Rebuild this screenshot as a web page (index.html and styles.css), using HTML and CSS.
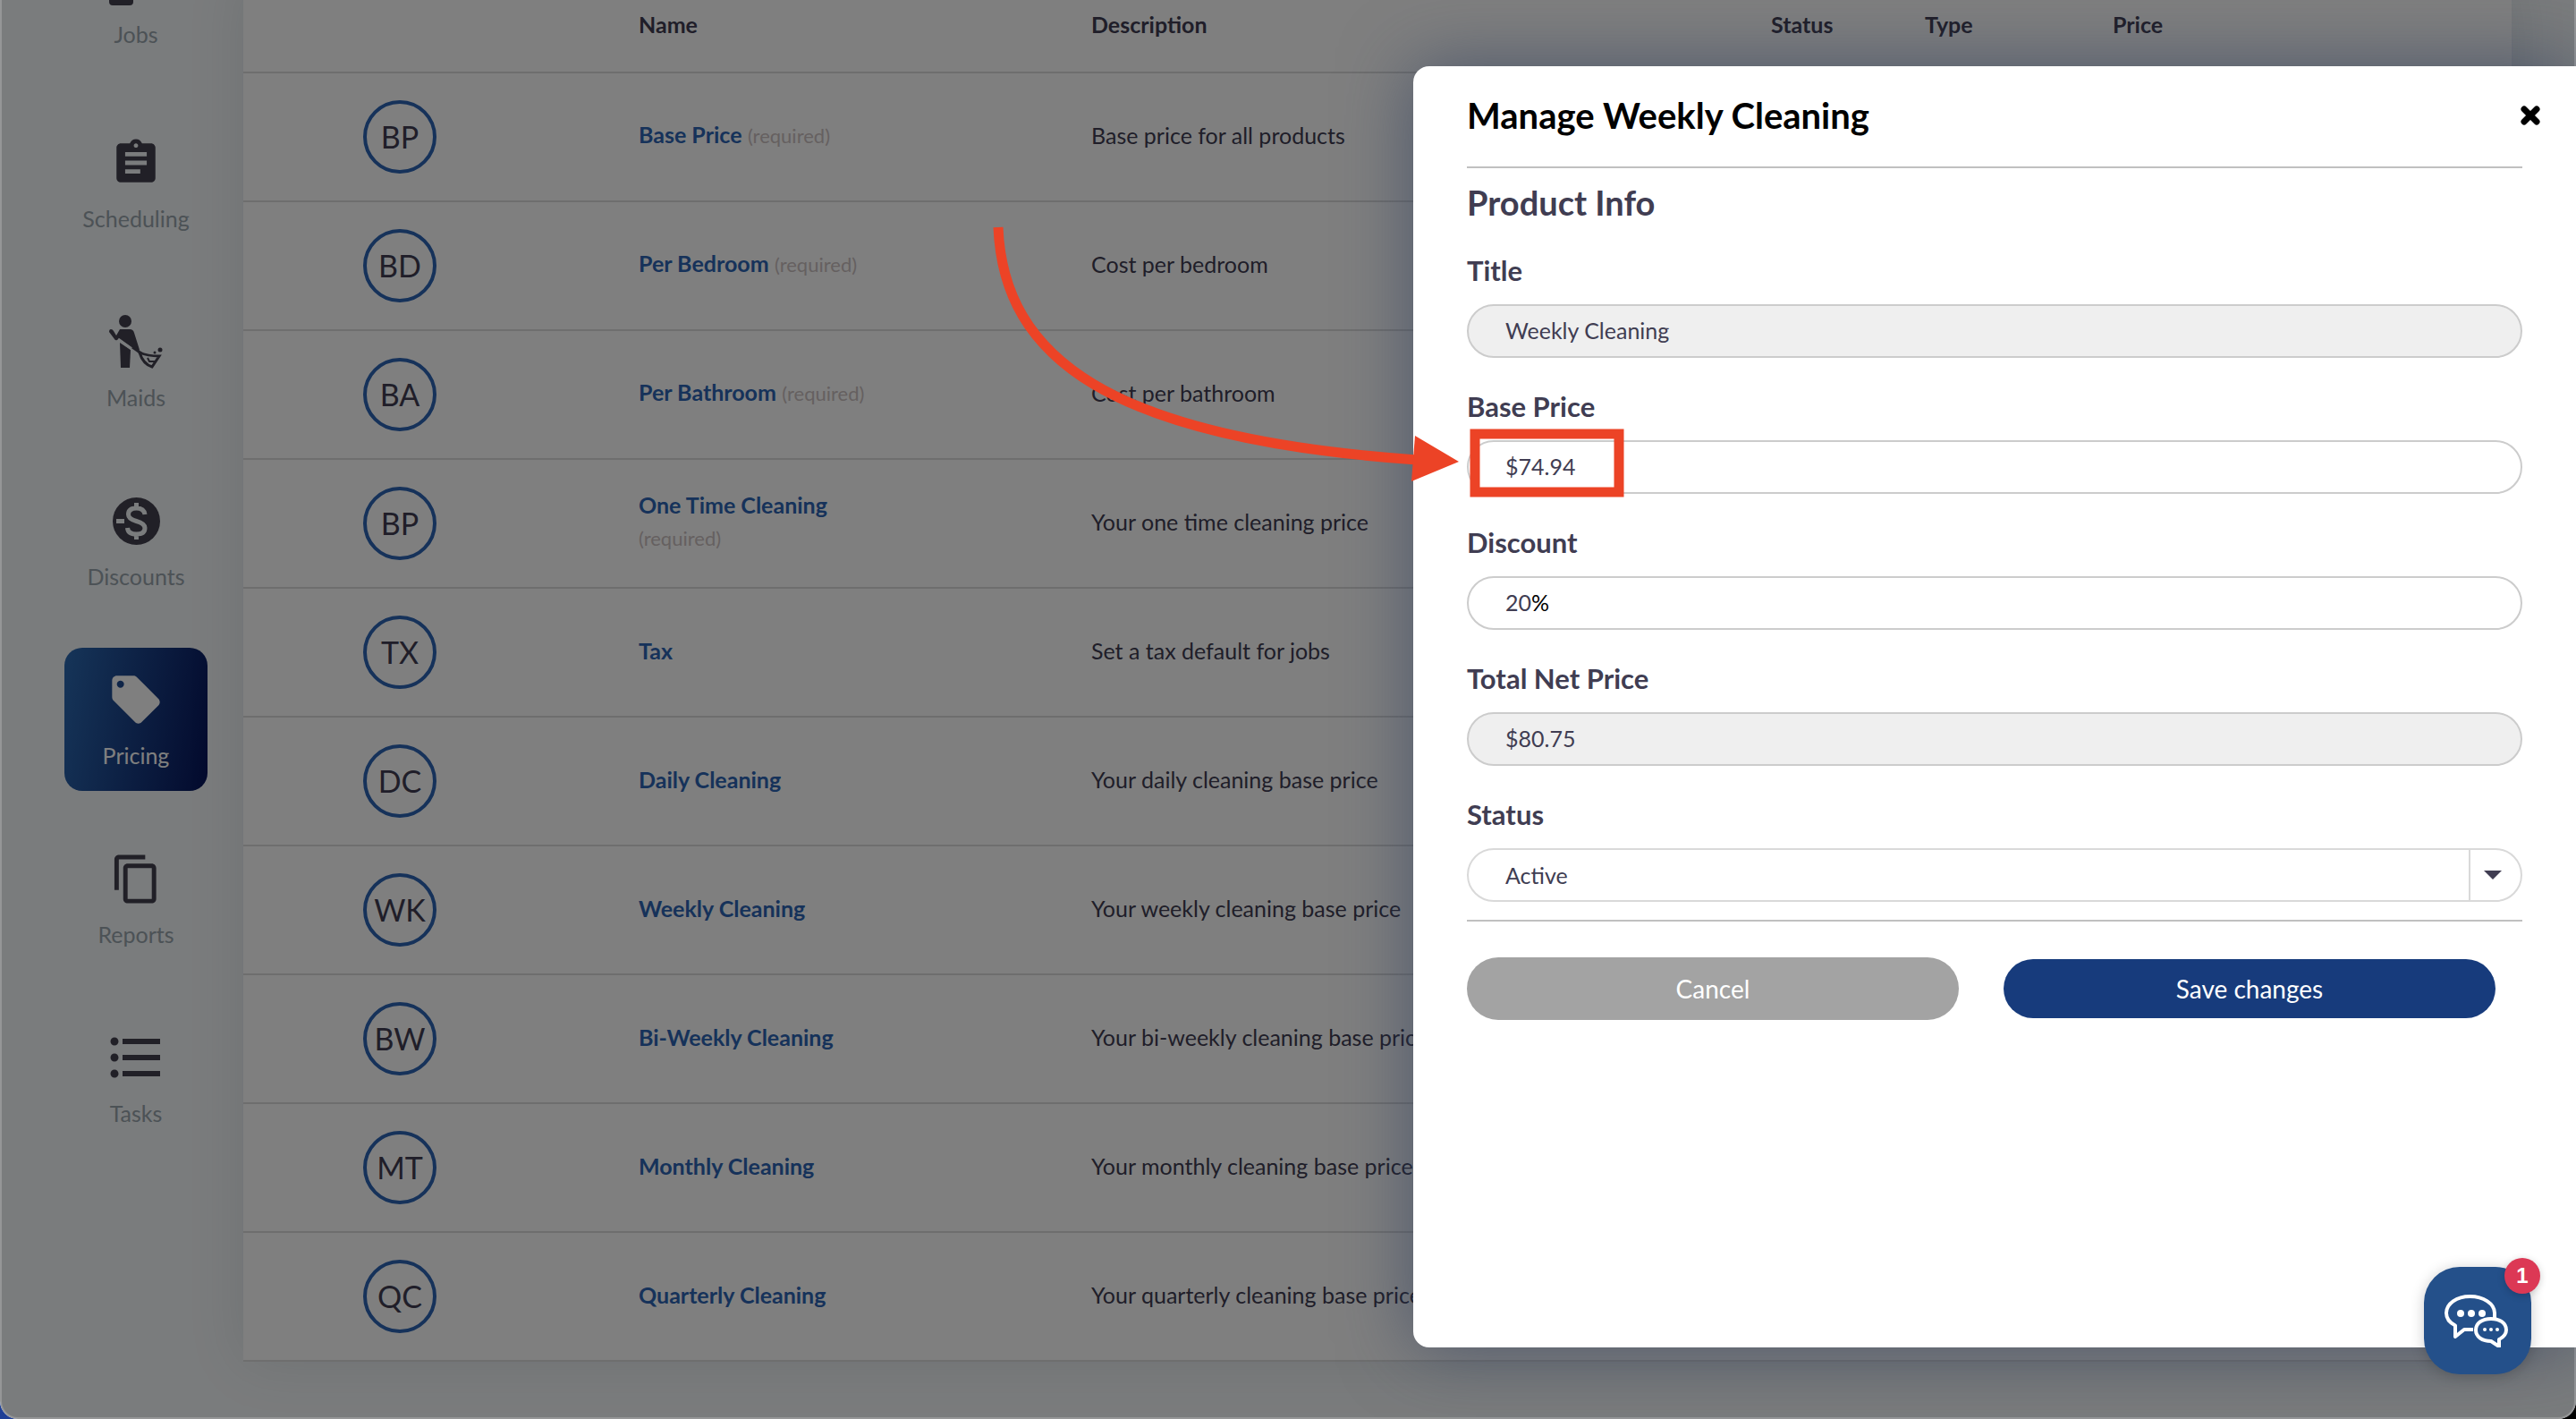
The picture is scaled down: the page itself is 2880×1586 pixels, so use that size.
FILE: index.html
```html
<!DOCTYPE html>
<html lang="en">
<head>
    <meta charset="UTF-8">
    <meta name="viewport" content="width=device-width, initial-scale=1.0">
    <title>Pricing</title>
    <link rel="stylesheet" href="styles.css">
</head>
<body>
    <div class="window">
        <nav class="sidebar">
            <a class="nav-item nav-jobs" href="#">
                <span class="nav-icon"><svg width="60" height="60" viewBox="0 0 60 60"><path d="M0 14h60v24H0zM0 42h27v14q0 4-4 4H4q-4 0-4-4z"/></svg></span>
                <span>Jobs</span>
            </a>
            <a class="nav-item" href="#">
                <span class="nav-icon"><svg width="58" height="58" viewBox="0 0 24 24"><path d="M19 3h-4.180C14.400 1.840 13.300 1 12 1s-2.400.84-2.820 2H5c-1.100 0-2 .9-2 2v14c0 1.100.9 2 2 2h14c1.100 0 2-.9 2-2V5c0-1.100-.9-2-2-2zm-7 0c.55 0 1 .45 1 1s-.45 1-1 1-1-.45-1-1 .45-1 1-1zm2 14H7v-2h7v2zm3-4H7v-2h10v2zm0-4H7V7h10v2z"/></svg></span>
                <span>Scheduling</span>
            </a>
            <a class="nav-item" href="#">
                <span class="nav-icon"><svg width="60" height="60" viewBox="0 0 60 60"><circle cx="18" cy="7" r="7"/><path d="M12 16h11q4 0 5 4l6 19-2 2-20-14-3 1q-2 1-3-1L0 19q0-3 2-3 2 0 3 2l3 5z"/><path d="M12 31l12 8-1 20h-10z"/><path d="M10 27l18 13" fill="none" stroke="#f5f8fa" stroke-width="3"/><path d="M26 36l10 7" fill="none" stroke="#42404f" stroke-width="3"/><path d="M34 42q9 4 22 4l-8 12q-10-3-14-16z" fill="none" stroke="#42404f" stroke-width="3"/><path d="M43 48l2 4h6" fill="none" stroke="#42404f" stroke-width="2"/><circle cx="57" cy="39" r="2.500"/><circle cx="51" cy="42" r="1.500"/></svg></span>
                <span>Maids</span>
            </a>
            <a class="nav-item" href="#">
                <span class="nav-icon"><svg width="53" height="53" viewBox="0 0 53 53"><circle cx="26.500" cy="26.500" r="26.500"/><path d="M4 26.500h9M26.500 6v6M26.500 41v6M36 19q-1-7-9.500-7-9 0-9 7 0 5 9 7.500t9.500 7.500q0 7-9.500 7t-10-7" fill="none" stroke="#f5f8fa" stroke-width="5"/></svg></span>
                <span>Discounts</span>
            </a>
            <a class="nav-item active" href="#">
                <span class="nav-icon"><svg width="64" height="64" viewBox="0 0 24 24"><path d="M21.410 11.580l-9-9C12.050 2.220 11.550 2 11 2H4c-1.100 0-2 .9-2 2v7c0 .55.22 1.050.59 1.420l9 9c.36.36.86.58 1.410.58.55 0 1.050-.22 1.410-.59l7-7c.37-.36.59-.86.59-1.410 0-.55-.23-1.060-.59-1.420zM5.500 7C4.670 7 4 6.330 4 5.500S4.670 4 5.500 4 7 4.670 7 5.500 6.330 7 5.500 7z"/></svg></span>
                <span>Pricing</span>
            </a>
            <a class="nav-item" href="#">
                <span class="nav-icon"><svg width="59" height="59" viewBox="0 0 24 24"><path d="M16 1H4c-1.100 0-2 .9-2 2v14h2V3h12V1zm3 4H8c-1.100 0-2 .9-2 2v14c0 1.100.9 2 2 2h11c1.100 0 2-.9 2-2V7c0-1.100-.9-2-2-2zm0 16H8V7h11v14z"/></svg></span>
                <span>Reports</span>
            </a>
            <a class="nav-item" href="#">
                <span class="nav-icon"><svg width="72" height="72" viewBox="0 0 24 24"><path d="M4 10.500c-.83 0-1.500.67-1.500 1.500s.67 1.500 1.500 1.500 1.500-.67 1.500-1.500-.67-1.500-1.500-1.500zm0-6c-.83 0-1.500.67-1.500 1.500S3.170 7.500 4 7.500 5.500 6.830 5.500 6 4.830 4.500 4 4.500zm0 12c-.83 0-1.500.68-1.500 1.500s.68 1.500 1.500 1.500 1.500-.68 1.500-1.500-.67-1.500-1.500-1.500zM7 19h14v-2H7v2zm0-6h14v-2H7v2zm0-8v2h14V5H7z"/></svg></span>
                <span>Tasks</span>
            </a>
        </nav>

        <main class="content">
            <table class="price-table">
                <colgroup>
                    <col class="col-avatar"><col class="col-name"><col class="col-desc"><col class="col-status"><col class="col-type"><col>
                </colgroup>
                <thead>
                    <tr><th></th><th>Name</th><th>Description</th><th>Status</th><th>Type</th><th>Price</th></tr>
                </thead>
                <tbody>
                    <tr><td><span class="avatar">BP</span></td><td><div class="name"><a href="#">Base Price</a> <small>(required)</small></div></td><td>Base price for all products</td><td></td><td></td><td></td></tr>
                    <tr><td><span class="avatar">BD</span></td><td><div class="name"><a href="#">Per Bedroom</a> <small>(required)</small></div></td><td>Cost per bedroom</td><td></td><td></td><td></td></tr>
                    <tr><td><span class="avatar">BA</span></td><td><div class="name"><a href="#">Per Bathroom</a> <small>(required)</small></div></td><td>Cost per bathroom</td><td></td><td></td><td></td></tr>
                    <tr><td><span class="avatar">BP</span></td><td><div class="name"><a href="#">One Time Cleaning</a> <small>(required)</small></div></td><td>Your one time cleaning price</td><td></td><td></td><td></td></tr>
                    <tr><td><span class="avatar">TX</span></td><td><div class="name"><a href="#">Tax</a></div></td><td>Set a tax default for jobs</td><td></td><td></td><td></td></tr>
                    <tr><td><span class="avatar">DC</span></td><td><div class="name"><a href="#">Daily Cleaning</a></div></td><td>Your daily cleaning base price</td><td></td><td></td><td></td></tr>
                    <tr><td><span class="avatar">WK</span></td><td><div class="name"><a href="#">Weekly Cleaning</a></div></td><td>Your weekly cleaning base price</td><td></td><td></td><td></td></tr>
                    <tr><td><span class="avatar">BW</span></td><td><div class="name"><a href="#">Bi-Weekly Cleaning</a></div></td><td>Your bi-weekly cleaning base price</td><td></td><td></td><td></td></tr>
                    <tr><td><span class="avatar">MT</span></td><td><div class="name"><a href="#">Monthly Cleaning</a></div></td><td>Your monthly cleaning base price</td><td></td><td></td><td></td></tr>
                    <tr><td><span class="avatar">QC</span></td><td><div class="name"><a href="#">Quarterly Cleaning</a></div></td><td>Your quarterly cleaning base price</td><td></td><td></td><td></td></tr>
                </tbody>
            </table>
        </main>

        <div class="overlay"></div>

        <form class="modal">
            <header class="modal-header">
                <h1>Manage Weekly Cleaning</h1>
                <button class="close" type="button" aria-label="Close"><svg width="22" height="22" viewBox="0 0 22 22"><path d="M4 4l14 14M18 4L4 18" stroke="#000" stroke-width="7" stroke-linecap="round"/></svg></button>
            </header>
            <section class="modal-body">
                <h2>Product Info</h2>
                <label for="title">Title</label>
                <input class="field" id="title" type="text" value="Weekly Cleaning" readonly>
                <label for="base">Base Price</label>
                <input class="field" id="base" type="text" value="$74.94">
                <label for="discount">Discount</label>
                <div class="field field-group">
                    <input id="discount" type="text" value="20"><span>%</span>
                </div>
                <label for="total">Total Net Price</label>
                <input class="field" id="total" type="text" value="$80.75" readonly>
                <label for="status">Status</label>
                <div class="field select-group">
                    <select id="status"><option>Active</option><option>Inactive</option></select>
                    <span class="caret"></span>
                </div>
            </section>
            <footer class="modal-footer">
                <button class="btn cancel" type="button">Cancel</button>
                <button class="btn save" type="submit">Save changes</button>
            </footer>
        </form>

        <svg class="annotation" width="1900" height="600" viewBox="0 0 1900 600">
            <path d="M1116 254C1122 400 1240 490 1584 514" fill="none" stroke="#ec4326" stroke-width="11"/>
            <path d="M1582 487L1631 516L1578 538z" fill="#ec4326"/>
            <rect x="1649" y="485" width="161" height="65" fill="none" stroke="#ec4326" stroke-width="11"/>
        </svg>

        <button class="chat" type="button" aria-label="Open chat">
            <svg width="72" height="60" viewBox="0 0 72 60" fill="none" stroke="#fff" stroke-width="4" stroke-linejoin="round">
                <path d="M33 40h-10l-10 8V35.500C6 32 3 27 3 21.500 3 11 14.500 3 29.500 3S57 11 57 21.500v6"/>
                <path d="M53 28c-10 0-17 5-17 12.500S43 53 53 53l9 6v-8c5-2.500 8-6 8-10.500C70 33 63 28 53 28z"/>
                <g fill="#fff" stroke="none"><circle cx="19" cy="22" r="4"/><circle cx="31" cy="22" r="4"/><circle cx="43" cy="22" r="4"/><circle cx="46" cy="40" r="2"/><circle cx="53" cy="40" r="2"/><circle cx="60" cy="40" r="2"/></g>
            </svg>
            <span class="badge">1</span>
        </button>
    </div>
</body>
</html>
```
FILE: styles.css
```css
* {
    box-sizing: border-box;
}

body {
    margin: 0;
    background: linear-gradient(90deg, #1f3f96, #000 50%);
    font-family: Lato, "Liberation Sans", sans-serif;
    font-size: 25px;
    line-height: 36px;
    color: #403d52;
}

a {
    text-decoration: none;
}

button,
input,
select {
    font: inherit;
    color: inherit;
}

.window {
    position: relative;
    display: flex;
    height: 100vh;
    overflow: hidden;
    background-color: #f5f8fa;
    border-radius: 0 0 20px 20px;
}

/* Sidebar */
.sidebar {
    flex: none;
    display: flex;
    flex-direction: column;
    gap: 40px;
    width: 272px;
    padding-left: 72px;
    margin-top: -76px;
}

.nav-item {
    display: flex;
    flex-direction: column;
    align-items: center;
    width: 160px;
    height: 160px;
    padding-top: 22px;
    border-radius: 20px;
    color: #98a4ac;
    fill: #42404f;
}

.nav-jobs {
    height: 166px;
    margin-top: -6px;
}

.nav-icon {
    display: flex;
    align-items: center;
    justify-content: center;
    height: 72px;
    margin-bottom: 8px;
}

.active {
    background: linear-gradient(100deg, #2c6ab2, #06145a);
    color: #fff;
    fill: #fff;
}

/* Price table */
.content {
    flex: 1;
    padding-right: 72px;
}

.price-table {
    width: 100%;
    margin-top: -26px;
    table-layout: fixed;
    border-collapse: separate;
    border-spacing: 0;
    background-color: #fff;
    box-shadow: 0 0 60px rgba(60, 80, 90, 0.12);
}

.col-avatar {
    width: 418px;
}

.col-name {
    width: 506px;
}

.col-desc {
    width: 760px;
}

.col-status {
    width: 172px;
}

.col-type {
    width: 210px;
}

th,
td {
    height: 144px;
    padding: 0 24px 4px;
    border-bottom: 2px solid #dcdcdc;
    text-align: left;
}

th {
    height: 108px;
    padding-bottom: 0;
}

td:first-child {
    padding: 0 0 0 134px;
}

.avatar {
    display: flex;
    align-items: center;
    justify-content: center;
    width: 82px;
    height: 82px;
    border: 4px solid #2c64b4;
    border-radius: 50%;
    font-size: 34px;
}

.name {
    width: 280px;
}

.name a {
    font-weight: bold;
    color: #2c64b4;
}

.name small {
    font-size: 22px;
    color: #cbc1c1;
}

/* Dims the page and draws the thin window edge */
.overlay {
    position: absolute;
    inset: 0;
    background-color: rgba(0, 0, 0, 0.5);
    border: 2px solid rgba(255, 255, 255, 0.2);
    border-top: 0;
    border-radius: 0 0 20px 20px;
}

/* Modal */
.modal {
    position: absolute;
    top: 74px;
    right: 0;
    bottom: 80px;
    width: 1300px;
    padding: 0 60px;
    background-color: #fff;
    border-radius: 18px 0 0 18px;
    box-shadow: 0 0 80px rgba(44, 60, 94, 0.6);
}

.modal-header {
    display: flex;
    align-items: center;
    justify-content: space-between;
    height: 114px;
    padding-bottom: 2px;
    border-bottom: 2px solid #c0c0c0;
}

h1,
h2 {
    margin: 0;
    line-height: 52px;
}

h1 {
    font-size: 40px;
    color: #000;
}

h2 {
    font-size: 38px;
}

.close {
    display: flex;
    padding: 0;
    margin-right: -20px;
    border: 0;
    background: none;
}

.modal-body {
    padding: 12px 0 16px;
    border-bottom: 2px solid #c0c0c0;
}

.modal-body label {
    display: block;
    padding: 28px 0 16px;
    font-size: 31px;
    line-height: 44px;
    font-weight: bold;
}

.field {
    display: flex;
    width: 100%;
    height: 60px;
    margin-bottom: 4px;
    padding: 0 41px 2px;
    border: 2px solid #ccc;
    border-radius: 30px;
    background-color: #fff;
}

.field[readonly] {
    background-color: #efefef;
}

.field-group {
    align-items: center;
    color: #000;
}

.field-group input {
    width: 29px;
    padding: 0;
    border: 0;
    color: #403d52;
}

.select-group {
    padding: 0;
    border-color: #d9d9d9;
}

.select-group select {
    flex: 1;
    padding: 0 41px;
    border: 0;
    background: none;
    appearance: none;
}

.caret {
    display: flex;
    align-items: center;
    justify-content: center;
    width: 58px;
    padding-right: 6px;
    border-left: 2px solid #d9d9d9;
}

.caret::before {
    content: "";
    border: 10px solid transparent;
    border-top-color: #403d52;
    border-bottom: 0;
}

.modal-footer {
    display: flex;
    align-items: center;
    gap: 50px;
    padding: 40px 30px 0 0;
}

.btn {
    flex: 1;
    height: 70px;
    border: 0;
    border-radius: 35px;
    font-size: 28px;
    color: #fff;
}

.cancel {
    background-color: #a3a3a3;
}

.save {
    height: 66px;
    background-color: #173b7c;
}

.annotation {
    position: absolute;
    top: 0;
    left: 0;
    pointer-events: none;
}

/* Chat widget */
.chat {
    position: absolute;
    right: 50px;
    bottom: 50px;
    display: flex;
    align-items: center;
    justify-content: center;
    width: 120px;
    height: 120px;
    padding: 0 4px 0 0;
    border: 0;
    border-radius: 40px;
    background-color: #24508a;
    box-shadow: 0 2px 16px rgba(0, 0, 0, 0.2);
}

.badge {
    position: absolute;
    top: -10px;
    right: -10px;
    width: 40px;
    height: 40px;
    border-radius: 50%;
    background-color: #dc3855;
    box-shadow: 0 2px 8px rgba(0, 0, 0, 0.2);
    font: bold 24px/40px "Liberation Sans", sans-serif;
    color: #fff;
}
```
